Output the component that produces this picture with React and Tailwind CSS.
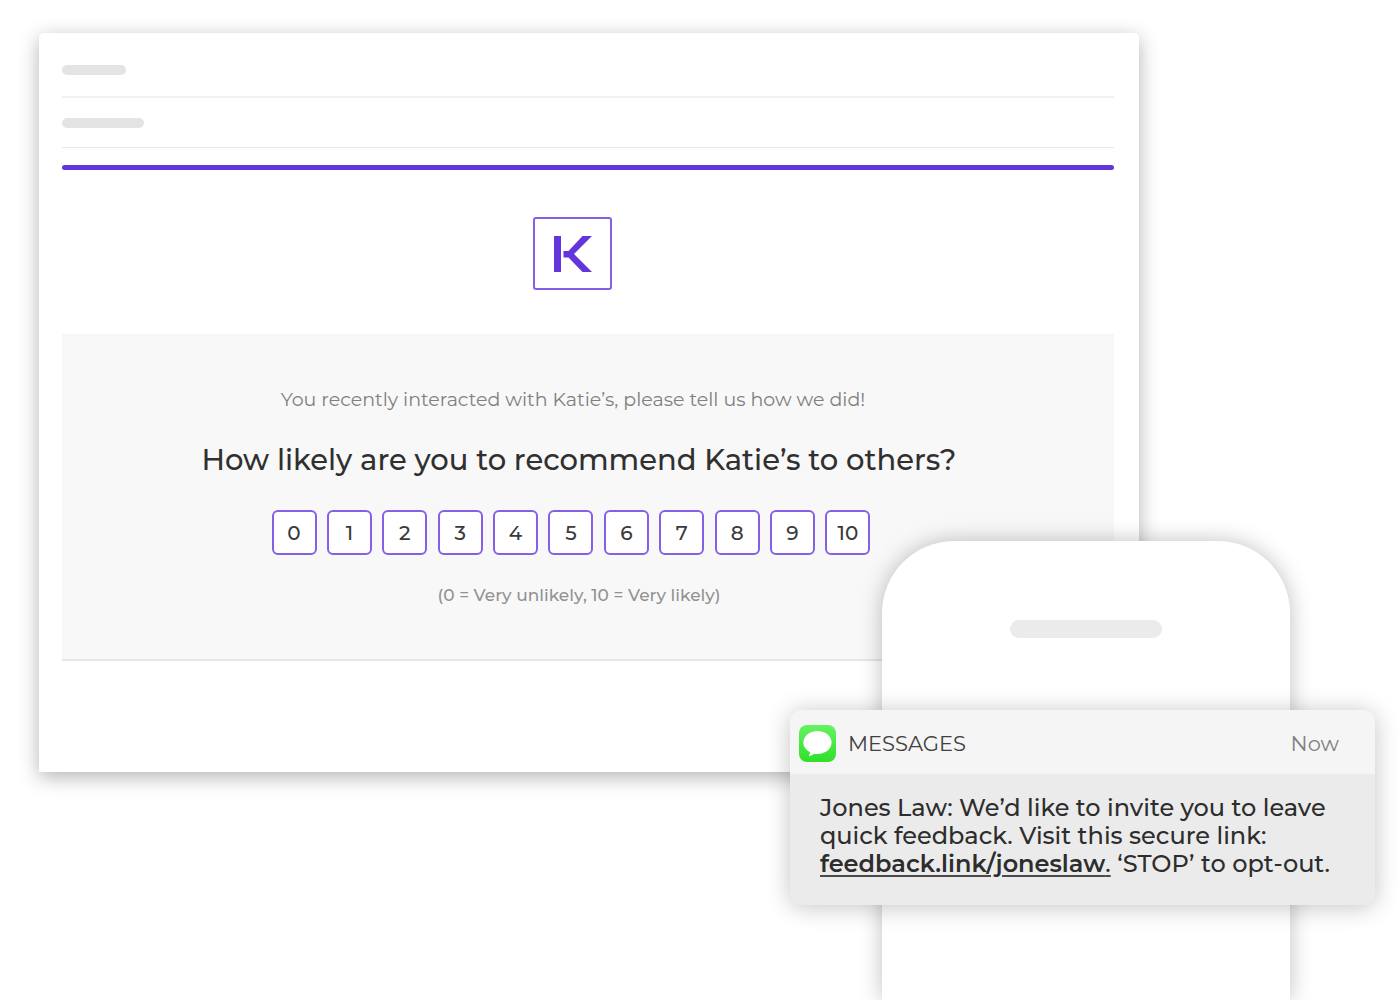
const scores = [0, 1, 2, 3, 4, 5, 6, 7, 8, 9, 10];

function Logo() {
  return (
    <div className="flex h-[73px] w-[79px] items-center justify-center rounded-[3px] border-2 border-[#8560e6]">
      <svg viewBox="-2 0 40 36" className="h-9 w-10" fill="#6336dd" aria-hidden="true">
        <rect x="0" y="0" width="7" height="36" />
        <path d="M28.500 0H38L20 18L38 36H28.500L14.500 21.500H9.500V15H14.500Z" />
      </svg>
    </div>
  );
}

function MessagesIcon() {
  return (
    <svg viewBox="0 0 37 37" className="h-[37px] w-[37px] shrink-0" aria-hidden="true">
      <defs>
        <linearGradient id="bubble-green" x1="0" y1="0" x2="0" y2="1">
          <stop offset="0" stopColor="#67f264" />
          <stop offset="1" stopColor="#2fdf2b" />
        </linearGradient>
      </defs>
      <rect width="37" height="37" rx="8" fill="url(#bubble-green)" />
      <path
        d="M18.500 6C10.700 6 4.400 11.100 4.400 17.500C4.400 21.500 7 25.100 10.900 27.100C11.200 28.700 10.600 30 9.700 31C12 30.800 13.700 29.900 15 28.700C16.100 28.900 17.300 29 18.500 29C26.300 29 32.600 23.900 32.600 17.500C32.600 11.100 26.300 6 18.500 6Z"
        fill="#fff"
      />
    </svg>
  );
}

function EmailCard() {
  return (
    <main className="rounded-t-[5px] bg-white pt-8 pr-[25px] pb-[111px] pl-[23px] shadow-[0_5px_20px_rgba(0,0,0,0.3)]">
      <div className="border-b-2 border-[#f1f1f1] pb-[21px]">
        <div className="h-[10px] w-16 rounded-full bg-[#e4e4e4]" />
      </div>
      <div className="border-b border-[#e8eaea] pt-5 pb-[19px]">
        <div className="h-[10px] w-[82px] rounded-full bg-[#e4e4e4]" />
      </div>
      <div className="mt-[17px] h-[5px] rounded-sm bg-[#6336dd]" />

      <div className="flex justify-center pt-[47px] pr-8 pb-11">
        <Logo />
      </div>

      <section className="flex flex-col items-center border-b-2 border-[#e6e6e6] bg-[#f8f8f8] pt-[54px] pr-[18px] pb-[52px]">
        <p className="mr-3 text-[19px] leading-6 text-[#808080]">
          You recently interacted with Katie’s, please tell us how we did!
        </p>
        <h1 className="mt-7 text-[29px] leading-10 font-medium text-[#303030]">
          How likely are you to recommend Katie’s to others?
        </h1>
        <div className="mt-[30px] mr-4 flex w-[599px] max-w-full justify-between">
          {scores.map((score) => (
            <button
              key={score}
              type="button"
              className="h-[45px] w-[45px] rounded-md border-2 border-[#8560e6] bg-white text-xl font-medium text-[#3a3a3a]"
            >
              {score}
            </button>
          ))}
        </div>
        <p className="mt-7 text-[17px] leading-6 font-medium text-[#929292]">(0 = Very unlikely, 10 = Very likely)</p>
      </section>
    </main>
  );
}

function Notification() {
  return (
    <aside className="absolute top-[710px] right-[25px] w-[585px] overflow-hidden rounded-xl bg-[#ebebeb] shadow-[0_2px_24px_rgba(0,0,0,0.24)]">
      <header className="flex h-16 items-center bg-[#f5f5f5] pt-[3px] pr-9 pl-[9px] text-[21px]">
        <MessagesIcon />
        <h2 className="ml-3 text-[#404040]">MESSAGES</h2>
        <span className="ml-auto text-[#808080]">Now</span>
      </header>
      <p className="px-[30px] pt-5 pb-[27px] text-2xl leading-7 font-medium text-[#2d2d2d]">
        Jones Law: We’d like to invite you to leave
        <br />
        quick feedback. Visit this secure link:
        <br />
        <a href="#feedback" className="underline decoration-[#4a4a4a] decoration-2 underline-offset-3">
          <span className="font-semibold">feedback.link/joneslaw</span>.
        </a>{' '}
        ‘STOP’ to opt-out.
      </p>
    </aside>
  );
}

export default function App() {
  return (
    <div className="relative min-h-screen overflow-hidden bg-white pt-[33px] pr-[261px] pl-[39px] font-[Montserrat,Inter,sans-serif]">
      <EmailCard />
      <div className="absolute top-[541px] right-[110px] bottom-0 flex w-[408px] justify-center rounded-t-[72px] bg-white pt-[79px] shadow-[0_0_22px_rgba(0,0,0,0.25)]">
        <div className="h-[18px] w-[152px] rounded-full bg-[#ebebeb]" />
      </div>
      <Notification />
    </div>
  );
}
